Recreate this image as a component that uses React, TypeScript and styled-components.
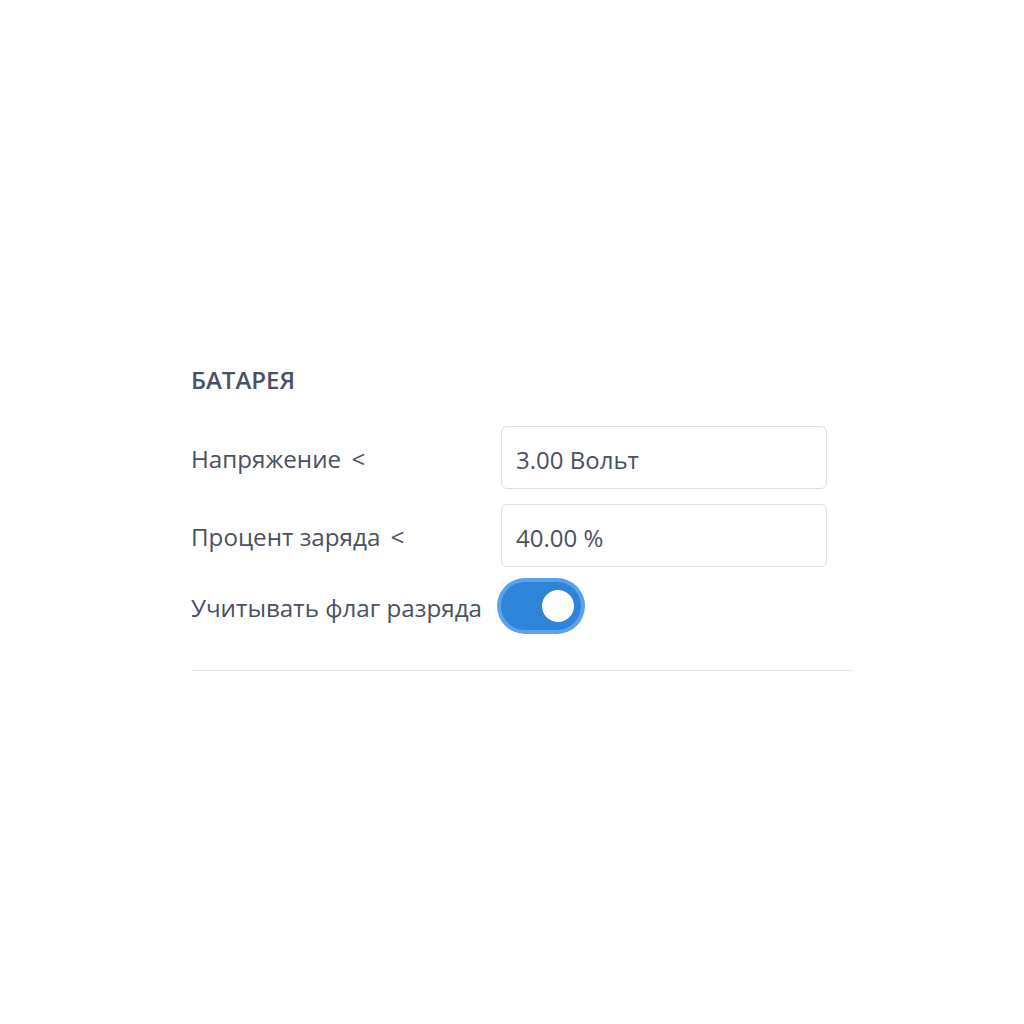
import React, { useState } from 'react';
import styled, { createGlobalStyle } from 'styled-components';

const GlobalStyle = createGlobalStyle`
    html, body {
        margin: 0;
        padding: 0;
        background: #ffffff;
    }
    body {
        font-family: "Open Sans", "Noto Sans", sans-serif;
        color: #4a5568;
    }
`;

const Page = styled.div`
    display: flex;
    padding: 362px 0 0 191px;
    width: 1024px;
    box-sizing: border-box;
`;

const Section = styled.section`
    width: 662px;
    border-bottom: 1px solid #e2e4ee;
    padding-bottom: 25px;
`;

const Title = styled.h3`
    margin: 0 0 28px;
    font-size: 24px;
    font-weight: 600;
    line-height: 36px;
    color: #4a5162;
`;

const Row = styled.div`
    display: flex;
    align-items: center;
    margin-bottom: 15px;
`;

const Label = styled.label`
    width: 310px;
    flex-shrink: 0;
    padding-top: 3px;
    font-size: 24.2px;
    line-height: 30px;
    color: #4a5162;
`;

const Lt = styled.span`
    margin-left: 4px;
`;

const Input = styled.input`
    width: 326px;
    height: 63px;
    box-sizing: border-box;
    padding: 3px 14px 0;
    border: 1px solid #dcdfe8;
    border-radius: 6px;
    font-family: inherit;
    font-size: 24px;
    color: #4a5162;
    background: #ffffff;
    outline: none;
`;

const Switch = styled.button<{ $on: boolean }>`
    width: 80px;
    height: 48px;
    border: none;
    padding: 0 8px;
    border-radius: 24px;
    display: flex;
    align-items: center;
    justify-content: ${(p) => (p.$on ? 'flex-end' : 'flex-start')};
    background: ${(p) => (p.$on ? '#2e84d8' : '#cbd5e0')};
    box-shadow: 0 0 0 4px #5aa2ee;
    cursor: pointer;
`;

const Knob = styled.span`
    width: 32px;
    height: 32px;
    border-radius: 50%;
    background: #ffffff;
    margin-right: -1px;
`;

const App: React.FC = () => {
    const [voltage, setVoltage] = useState('3.00 Вольт');
    const [percent, setPercent] = useState('40.00 %');
    const [flag, setFlag] = useState(true);

    return (
        <>
            <GlobalStyle />
            <Page>
                <Section>
                    <Title>БАТАРЕЯ</Title>
                    <Row>
                        <Label>Напряжение <Lt>&lt;</Lt></Label>
                        <Input value={voltage} onChange={(e) => setVoltage(e.target.value)} />
                    </Row>
                    <Row>
                        <Label>Процент заряда <Lt>&lt;</Lt></Label>
                        <Input value={percent} onChange={(e) => setPercent(e.target.value)} />
                    </Row>
                    <Row>
                        <Label>Учитывать флаг разряда</Label>
                        <Switch $on={flag} onClick={() => setFlag(!flag)}>
                            <Knob />
                        </Switch>
                    </Row>
                </Section>
            </Page>
        </>
    );
};

export default App;
